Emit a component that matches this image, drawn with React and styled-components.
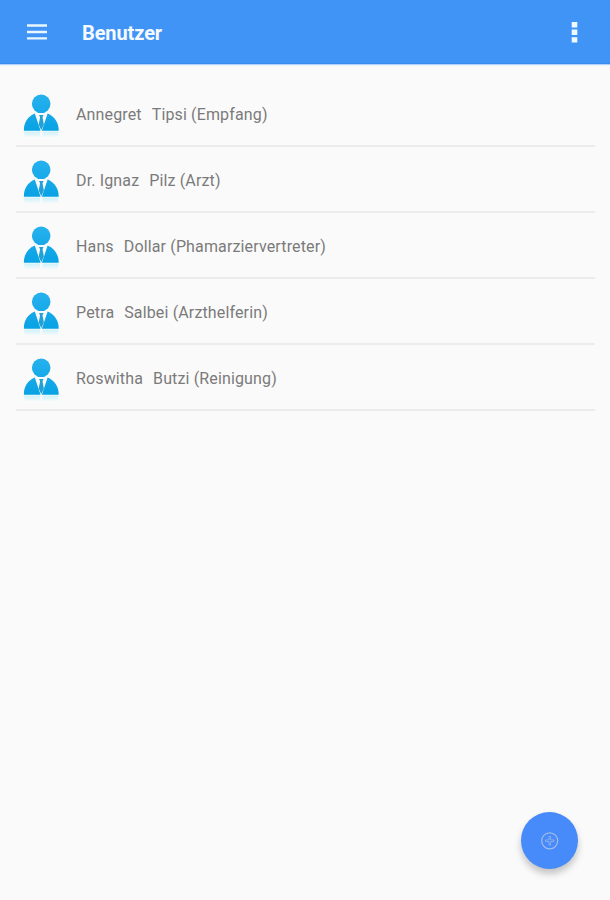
import React from 'react';
import styled, { createGlobalStyle } from 'styled-components'

const GlobalStyle = createGlobalStyle`
  body {
    margin: 0;
    background-color: #fafafa;
    font-family: Roboto, sans-serif;
  }
`

const Screen = styled.div`
  box-sizing: border-box;
  position: relative;
  display: flex;
  flex-direction: column;
  height: 900px;
  overflow: hidden;
  background-color: #fafafa;
`

const AppBar = styled.header`
  box-sizing: border-box;
  display: flex;
  align-items: center;
  flex: none;
  height: 64px;
  padding: 1px 25px 0 26px;
  background-color: #4094f6;
  border-bottom: 1px solid #3a8ceb;
  box-shadow: 0 1px 1px rgba(64, 148, 246, 0.4);
`

const Title = styled.h1`
  flex: 1;
  margin: 1px 0 0 34px;
  font-size: 20px;
  font-weight: 700;
  line-height: 24px;
  letter-spacing: -0.1px;
  color: #f4faff;
`

const IconButton = styled.button`
  display: flex;
  padding: 0;
  border: 0;
  background: none;
`

const UserList = styled.ul`
  margin: 0;
  padding: 17px 15px 0 16px;
  list-style: none;
`

const UserRow = styled.li`
  box-sizing: border-box;
  display: flex;
  align-items: center;
  height: 66.1px;
  padding: 6px 7px 0;
  border-bottom: 2px solid #ececec;
`

const UserName = styled.span`
  margin: 0 0 3px 16px;
  font-size: 16px;
  line-height: 20px;
  letter-spacing: 0.14px;
  color: #7a7a7a;
`

const FirstName = styled.span`
  margin-right: 10px;
`

// 플로팅 추가 버튼
const AddButton = styled.button`
  position: absolute;
  right: 32px;
  bottom: 31px;
  display: flex;
  align-items: center;
  justify-content: center;
  width: 57px;
  height: 57px;
  padding: 0;
  border: 0;
  border-radius: 50%;
  background-color: #478af9;
  box-shadow: 0 5px 7px rgba(0, 0, 0, 0.22);
`

const users = [
  { first: 'Annegret', last: 'Tipsi', role: 'Empfang' },
  { first: 'Dr. Ignaz', last: 'Pilz', role: 'Arzt' },
  { first: 'Hans', last: 'Dollar', role: 'Phamarziervertreter' },
  { first: 'Petra', last: 'Salbei', role: 'Arzthelferin' },
  { first: 'Roswitha', last: 'Butzi', role: 'Reinigung' },
]

function MenuIcon() {
  return (
    <svg width="22" height="18" viewBox="0 0 22 18" stroke="#e9f6ff" strokeWidth="2.3">
      <path d="M1 2.5h20M1 9h20M1 15.3h20" />
    </svg>
  )
}

function MoreIcon() {
  return (
    <svg width="21" height="22" viewBox="0 0 21 22" fill="#eefaff">
      <path d="M7.7 1h5.6v5.4H7.7zM7.7 8.6h5.6V14H7.7zM7.7 16.2h5.6v5.4H7.7z" />
    </svg>
  )
}

function PersonIcon() {
  return (
    <svg width="37" height="44" viewBox="0 0 37 44">
      <defs>
        <linearGradient id="person" x1="0" y1="0" x2="0" y2="37" gradientUnits="userSpaceOnUse">
          <stop offset="0" stopColor="#27b1ee" />
          <stop offset="1" stopColor="#08a2e4" />
        </linearGradient>
        <linearGradient id="reflection" x1="0" y1="37" x2="0" y2="43" gradientUnits="userSpaceOnUse">
          <stop offset="0" stopColor="#c9f1fa" />
          <stop offset="1" stopColor="#c9f1fa" stopOpacity="0.15" />
        </linearGradient>
      </defs>
      <circle cx="18.2" cy="9.8" r="9.3" fill="url(#person)" />
      <path
        d="M11.8 19.6 17.6 36.8H.9C.7 29.5 4.3 22.6 11.8 19.6zM24.6 19.6 18.9 36.8H35.7C35.9 29.5 32 22.6 24.6 19.6z"
        fill="url(#person)"
      />
      <path d="M16 21h4.5l-1 2.3 1.4 7.2-2.6 5.7-2.6-5.7 1.4-7.2z" fill="#21a2d6" />
      <path d="M1 37.6h15.8l.8 5.4H1.8zM19.8 37.6h15.8l-.8 5.4H19z" fill="url(#reflection)" />
    </svg>
  )
}

function PlusIcon() {
  return (
    <svg width="18" height="18" viewBox="0 0 18 18" fill="none" stroke="#a3bdea">
      <circle cx="8.7" cy="8.8" r="8" strokeWidth="1.2" />
      <path d="M8 4.5h1.6v3.4H13v1.7H9.6V13H8V9.6H4.6V7.9H8z" strokeWidth="0.7" />
    </svg>
  )
}

export default function App() {
  return (
    <>
      <GlobalStyle />
      <Screen>
        <AppBar>
          <IconButton><MenuIcon /></IconButton>
          <Title>Benutzer</Title>
          <IconButton><MoreIcon /></IconButton>
        </AppBar>
        <UserList>
          {users.map((user) => (
            <UserRow key={user.first}>
              <PersonIcon />
              <UserName>
                <FirstName>{user.first}</FirstName>
                {user.last} ({user.role})
              </UserName>
            </UserRow>
          ))}
        </UserList>
        <AddButton><PlusIcon /></AddButton>
      </Screen>
    </>
  )
}
